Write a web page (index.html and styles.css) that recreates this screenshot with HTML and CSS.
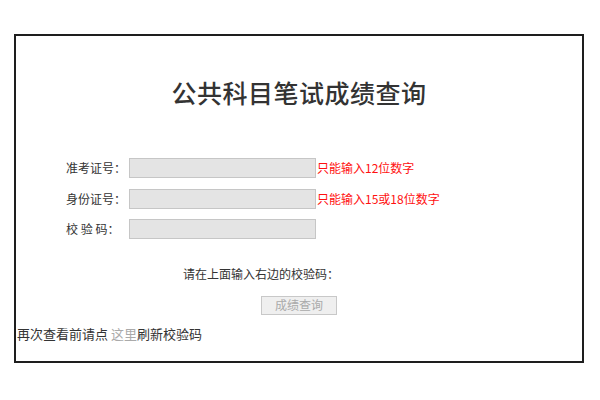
FILE: index.html
```html
<!DOCTYPE html>
<html lang="zh-CN">
<head>
<meta charset="utf-8">
<title>公共科目笔试成绩查询</title>
<link rel="stylesheet" href="styles.css">
</head>
<body>
<div class="box">
  <h1 class="title">公共科目笔试成绩查询</h1>
  <form class="form">
    <div class="row">
      <label class="label">准考证号：</label>
      <input class="field" type="text">
      <span class="hint">只能输入12位数字</span>
    </div>
    <div class="row">
      <label class="label">身份证号：</label>
      <input class="field" type="text">
      <span class="hint">只能输入15或18位数字</span>
    </div>
    <div class="row">
      <label class="label">校&nbsp;验&nbsp;码：</label>
      <input class="field" type="text">
    </div>
    <div class="prompt">请在上面输入右边的校验码：</div>
    <div class="actions">
      <button class="btn" type="button" disabled>成绩查询</button>
    </div>
  </form>
  <div class="refresh">再次查看前请点 <a class="link" href="#">这里</a>刷新校验码</div>
</div>
</body>
</html>
```
FILE: styles.css
```css
html, body {
  margin: 0;
  padding: 0;
  background: #fff;
}
body {
  font-family: "Noto Sans CJK SC", "Noto Sans", sans-serif;
  color: #333;
}
.box {
  box-sizing: border-box;
  width: 570px;
  height: 329px;
  margin: 34px 0 0 14px;
  border: 2px solid #1e1e1e;
  display: flex;
  flex-direction: column;
}
.title {
  margin: 41px 0 0 0;
  font-size: 25px;
  line-height: 30px;
  font-weight: 500;
  text-align: center;
  color: #333;
  letter-spacing: 0.5px;
}
.form {
  margin: 51px 0 0 0;
  display: flex;
  flex-direction: column;
}
.row {
  display: flex;
  align-items: center;
  height: 20px;
  margin-bottom: 10.5px;
  padding-left: 50px;
}
.label {
  width: 63px;
  font-size: 12px;
  line-height: 16px;
  color: #333;
  white-space: nowrap;
}
.field {
  box-sizing: border-box;
  width: 187px;
  height: 20px;
  margin: 0;
  padding: 0 3px;
  border: 1px solid #c6c6c6;
  background: #e4e4e4;
}
.hint {
  margin-left: 1px;
  font-size: 12px;
  line-height: 16px;
  color: #ff1010;
  white-space: nowrap;
}
.prompt {
  margin-top: 16px;
  padding-left: 167px;
  font-size: 12px;
  line-height: 16px;
  color: #333;
}
.actions {
  display: flex;
  justify-content: center;
  margin-top: 14px;
}
.btn {
  box-sizing: border-box;
  width: 76px;
  height: 19px;
  padding: 0;
  border: 1px solid #c8c8c8;
  background: #efefef;
  color: #aaa;
  font-family: "Noto Sans CJK SC", sans-serif;
  font-size: 12px;
  line-height: 16px;
}
.refresh {
  margin-top: 10px;
  padding-left: 1px;
  font-size: 13px;
  line-height: 17px;
  color: #333;
}
.link {
  color: #aaa;
  text-decoration: none;
}
```
